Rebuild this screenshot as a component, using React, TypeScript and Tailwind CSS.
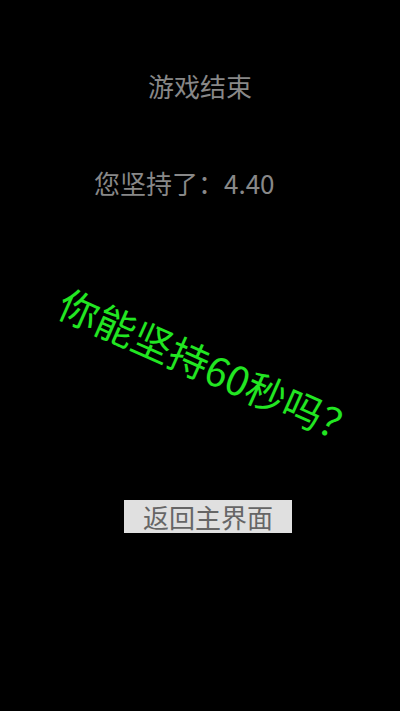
import React from "react";

export default function App() {
  const font = { fontFamily: '"Noto Sans CJK SC", "Noto Sans", sans-serif' };
  return (
    <div className="w-full h-[711px] bg-black flex flex-col items-center overflow-hidden" style={font}>
      <div className="mt-[70px] text-[26px] leading-[32px] text-[#888888]">游戏结束</div>
      <div className="mt-[65px] self-start ml-[94px] text-[26px] leading-[32px] text-[#888888]">您坚持了：4.40</div>
      <div className="mt-[143px] h-[48px] flex items-center justify-center">
        <div className="rotate-[24deg] whitespace-nowrap text-[40px] leading-[48px] text-[#22e622] ml-[20px]">你能坚持60秒吗？</div>
      </div>
      <button className="mt-[110px] ml-[16px] w-[168px] h-[33px] bg-[#e0e0e0] text-[#666666] text-[26px] leading-[33px] flex items-center justify-center">返回主界面</button>
    </div>
  );
}
